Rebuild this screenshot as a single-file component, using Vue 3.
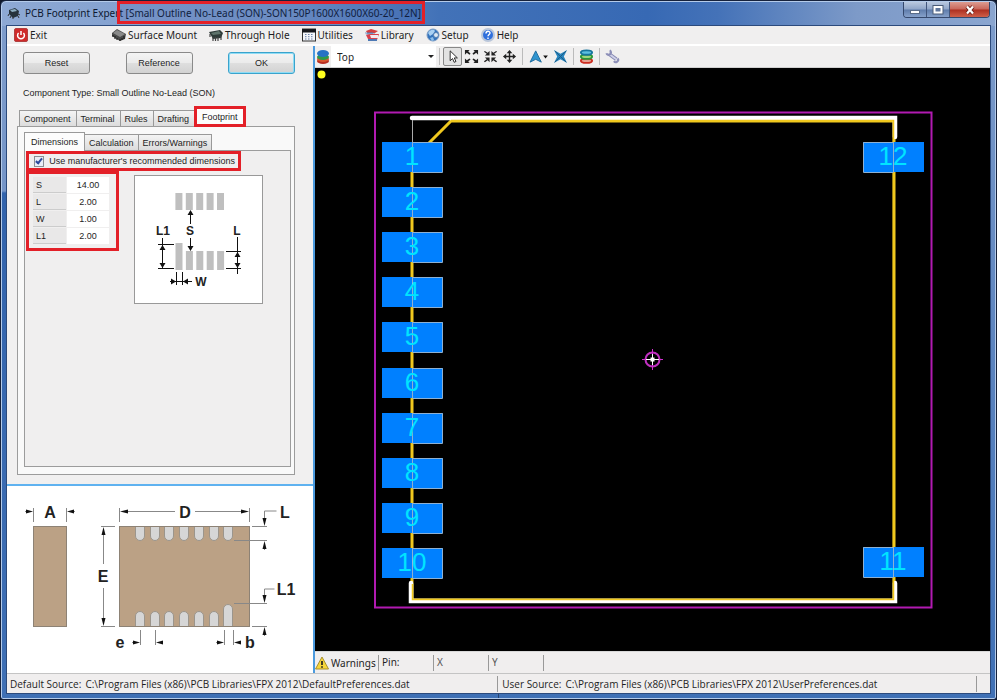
<script setup>
import { ref, computed } from 'vue'

const menu = [
  { label: 'Exit', icon: 'exit' },
  { label: 'Surface Mount', icon: 'chip' },
  { label: 'Through Hole', icon: 'dip' },
  { label: 'Utilities', icon: 'calc' },
  { label: 'Library', icon: 'books' },
  { label: 'Setup', icon: 'gear' },
  { label: 'Help', icon: 'help' }
]
const tabs = ['Component', 'Terminal', 'Rules', 'Drafting', 'Footprint']
const subTabs = ['Dimensions', 'Calculation', 'Errors/Warnings']
const activeTab = ref('Footprint')
const activeSub = ref('Dimensions')
const recommended = ref(true)
const layer = ref('Top')
const dims = ref([
  { name: 'S', value: '14.00' },
  { name: 'L', value: '2.00' },
  { name: 'W', value: '1.00' },
  { name: 'L1', value: '2.00' }
])

const pads = computed(() => {
  const left = Array.from({ length: 10 }, (_, i) => ({ n: i + 1, x: 382, y: 142 + Math.round(i * 45.1) }))
  return [...left, { n: 11, x: 863, y: 547 }, { n: 12, x: 863, y: 142 }]
})
const leads = Array.from({ length: 7 }, (_, i) => 136 + Math.round(i * 14.7))
</script>

<template>
  <div class="window">
    <header class="titlebar">
      <svg class="app-icon" viewBox="0 0 14 14" aria-hidden="true">
        <path d="M2 4 8 2l4 3-1 5-5 2-4-4z" fill="#26333d" />
        <path d="M3 4l5-1 2 2-5 1z" fill="#8fb0c4" />
        <path d="M2 8l-1 2M4 10l-1 2M6 11v2M11 8l2 1M11 10l1 2" stroke="#333" />
      </svg>
      <h1 class="title">PCB Footprint Expert <span class="doc">[Small Outline No-Lead (SON)-SON150P1600X1600X60-20_12N]</span></h1>
      <div class="caption">
        <button type="button" aria-label="Minimize"><svg viewBox="0 0 14 12"><rect x="2.5" y="6.5" width="9" height="3" fill="#fff" stroke="#5a6c88" /></svg></button>
        <button type="button" aria-label="Maximize"><svg viewBox="0 0 14 12"><rect x="3.5" y="3" width="7" height="5.5" fill="none" stroke="#4a5c78" stroke-width="4" /><rect x="3.5" y="3" width="7" height="5.5" fill="#60779c" stroke="#fff" stroke-width="2" /></svg></button>
        <button type="button" class="close" aria-label="Close"><svg viewBox="0 0 14 12"><path d="M4 2.5l6 7M10 2.5l-6 7" stroke="#6d2018" stroke-width="4" /><path d="M4 2.5l6 7M10 2.5l-6 7" stroke="#fff" stroke-width="2.2" /></svg></button>
      </div>
    </header>

    <div class="client">
      <nav class="menubar">
        <button v-for="m in menu" :key="m.label" type="button" :class="['menu-item', m.icon]">
          <svg viewBox="0 0 14 14" aria-hidden="true">
            <template v-if="m.icon === 'exit'">
              <rect x="0.5" y="0.5" width="13" height="13" rx="1.5" fill="#cf2a2a" stroke="#b04040" />
              <path d="M4.600 5a3.400 3.400 0 1 0 4.800 0M7 3v4" fill="none" stroke="#fff" stroke-width="1.5" />
            </template>
            <template v-else-if="m.icon === 'chip'">
              <path d="M0 5 5 1l9 5-1 5-5 2-8-5z" fill="#4a4a4a" />
              <path d="M1 5l4-3 8 4-5 3z" fill="#8a8a8a" />
              <path d="M1 7v2M3 8v3M5 10v2M8 11v2M10 10v2M12 8v3" stroke="#222" stroke-width="1.2" />
            </template>
            <template v-else-if="m.icon === 'dip'">
              <path d="M0 4 11 2l3 3-2 5-8 1z" fill="#2e3b38" />
              <path d="M2 5l8-2 2 3-8 1z" fill="#5f746c" />
              <path d="M1 6v3M4 9v4M6.500 9v4M9 9v4M12 8v4" stroke="#444" stroke-width="1.2" />
            </template>
            <template v-else-if="m.icon === 'calc'">
              <rect x="0.5" y="1" width="13" height="12" fill="#f4f6fa" stroke="#333" />
              <rect x="0" y="1" width="14" height="3.5" fill="#16181c" />
              <path d="M3 6.500h8M3 8.700h8M3 11h8" stroke="#6980a8" stroke-dasharray="1.5 1.5" />
            </template>
            <template v-else-if="m.icon === 'books'">
              <path d="M1 3l5-2 7 2-3 2H2z" fill="#d34040" />
              <path d="M0 4c0 2 1 3 3 3h7V5H3z" fill="#9fb6d4" />
              <path d="M1 7l2 4 9 1 2-6H5z" fill="#d8404c" />
              <path d="M5 7h8v3H6z" fill="#f3e9ee" />
              <path d="M3 12h9" stroke="#4d79b5" stroke-width="2" />
              <path d="M2 5h6" stroke="#4d79b5" />
            </template>
            <template v-else-if="m.icon === 'gear'">
              <circle cx="7" cy="7" r="6" fill="#3474bd" stroke="#7c9cc4" />
              <path d="M2 5c2-4 6-4 7-2L7 6 4 8z" fill="#a9d1f3" />
              <path d="M4 10l3-1 1 3-2 1z" fill="#8fc0ea" />
              <circle cx="10" cy="7" r="2.5" fill="#dce9f5" stroke="#5480b0" />
            </template>
            <template v-else>
              <circle cx="7" cy="7" r="6" fill="#2f6fdc" stroke="#b9c6da" stroke-width="2" />
              <path d="M5 5.500c0-3 4-2.700 4-.5C9 6.500 7 6.500 7 8.300M7 9.500V11" fill="none" stroke="#fff" stroke-width="1.4" />
            </template>
          </svg>
          <span>{{ m.label }}</span>
        </button>
      </nav>

      <div class="workspace">
        <aside class="side">
          <section class="form">
            <div class="actions">
              <button type="button">Reset</button>
              <button type="button">Reference</button>
              <button type="button" class="default">OK</button>
            </div>
            <p class="type">Component Type: Small Outline No-Lead (SON)</p>

            <div class="tabs outer" role="tablist">
              <button v-for="t in tabs" :key="t" type="button" role="tab" :aria-selected="t === activeTab"
                :class="{ active: t === activeTab, marked: t === 'Footprint' }" @click="activeTab = t">{{ t }}</button>
            </div>
            <div class="page outer-page">
              <div class="tabs inner" role="tablist">
                <button v-for="t in subTabs" :key="t" type="button" role="tab" :aria-selected="t === activeSub"
                  :class="{ active: t === activeSub }" @click="activeSub = t">{{ t }}</button>
              </div>
              <div class="page inner-page">
                <label class="check">
                  <input v-model="recommended" type="checkbox" />
                  <span>Use manufacturer's recommended dimensions</span>
                </label>
                <div class="split">
                  <div class="dims">
                    <table>
                      <tbody>
                        <tr v-for="d in dims" :key="d.name">
                          <th scope="row"><label :for="'dim-' + d.name">{{ d.name }}</label></th>
                          <td><input :id="'dim-' + d.name" v-model="d.value" type="text" /></td>
                        </tr>
                      </tbody>
                    </table>
                  </div>
                  <svg class="preview" viewBox="134 175 129 129" role="img" aria-label="Land pattern dimensions">
                    <rect x="134.5" y="175.5" width="128" height="128" fill="#fff" stroke="#999" />
                    <g fill="#bfbfbf">
                      <rect v-for="i in 5" :key="'t' + i" :x="165 + i * 10.4" y="193" width="7" height="17" />
                      <rect v-for="i in 4" :key="'b' + i" :x="175.5 + i * 10.4" y="251" width="7" height="19" />
                      <rect x="175.5" y="243" width="7" height="27" />
                    </g>
                    <path d="M190.500 211v13M190.500 238v12M162.500 238v31M158 244.500h16M158 268.500h16M237.500 237v37M226 251.500h15M226 268.500h15M170 281.500h22M176.500 272v13M182.500 272v13" fill="none" stroke="#111" />
                    <path d="M190.500 210l-3 5h6zM190.500 251l-3-5h6zM162.500 245l-3 5h6zM162.500 268l-3-5h6zM237.500 252l-3 5h6zM237.500 268l-3-5h6zM176 281.500l-5-3v6zM183 281.500l5-3v6z" fill="#111" />
                    <g class="mark small">
                      <text x="163" y="235">L1</text><text x="190" y="235">S</text>
                      <text x="237" y="235">L</text><text x="201" y="286">W</text>
                    </g>
                  </svg>
                </div>
              </div>
            </div>
          </section>

          <svg class="package" viewBox="7 486 306 187" role="img" aria-label="Package outline dimensions">
            <g fill="#bba185" stroke="#8d8275">
              <rect x="33.5" y="526.5" width="33" height="100" />
              <rect x="119.5" y="526.5" width="130" height="100" />
            </g>
            <g fill="#d6d6d6" stroke="#9b958c">
              <path v-for="x in leads" :key="'u' + x" :d="`M${x - 0.5} 527v9a4.5 4.5 0 0 0 9 0v-9`" />
              <path v-for="(x, i) in leads" :key="'d' + x" :d="`M${x - 0.5} 626v${i === 6 ? -17 : -10}a4.5 4.5 0 0 1 9 0v${i === 6 ? 17 : 10}`" />
            </g>
            <path d="M33.500 508v14M66.500 508v14M119.500 508v14M249.500 508v14M126 511.500h49M195 511.500h48M101 526.500h14M101 626.500h14M103.500 533v31M103.500 588v31M252 526.500h15M234 540.500h33M234 603.500h33M252 626.500h15M264.500 518v-7h12M264.500 596v-7h10M140.500 630v15M155.500 630v15M224.500 630v15M233.500 630v15M25 511.500h4M70 511.500h5M132 642.500h4M159 642.500h4M216 642.500h4M237 642.500h4M264.500 545v5M264.500 630v6" fill="none" stroke="#888" />
            <path d="M33 511.500l-7-2v4zM67 511.500l7-2v4zM120 511.500l8-2v4zM249 511.500l-8-2v4zM103.500 527l-2 8h4zM103.500 626l-2-8h4zM264.500 526l-2-8h4zM264.500 541l-2 8h4zM264.500 603l-2-8h4zM264.500 627l-2 8h4zM140 642.500l-7-2v4zM156 642.500l7-2v4zM224 642.500l-7-2v4zM234 642.500l7-2v4z" fill="#111" />
            <g class="mark">
              <text x="50" y="518">A</text><text x="185" y="518">D</text><text x="285" y="518">L</text>
              <text x="103" y="582">E</text><text x="286" y="595">L1</text>
              <text x="120" y="648">e</text><text x="250" y="648">b</text>
            </g>
          </svg>
        </aside>

        <main class="view">
          <div class="toolbar">
            <svg class="layers" viewBox="0 0 16 16" aria-hidden="true">
              <ellipse cx="8" cy="12" rx="6" ry="3" fill="#b82e22" /><ellipse cx="8" cy="10" rx="6" ry="3" fill="#d8552e" />
              <ellipse cx="8" cy="8" rx="6" ry="3" fill="#2f9a48" /><ellipse cx="8" cy="4.5" rx="6" ry="3.5" fill="#2672c4" />
            </svg>
            <div class="layer-pick">
              <select v-model="layer" aria-label="Layer"><option>Top</option><option>Bottom</option></select>
            </div>
            <i class="sep"></i>
            <button type="button" class="pressed" aria-label="Select">
              <svg viewBox="0 0 16 16"><path d="M5.500 2v10.500l2.500-2.300 1.800 4 1.900-.9-1.800-3.800h3.300z" fill="#fff" stroke="#222" /></svg>
            </button>
            <button type="button" aria-label="Zoom to fit">
              <svg viewBox="0 0 16 16"><path d="M1 1h5L4.500 2.500 7 5 5.800 6 3 4 1 6zM15 1v5l-2-2-2.800 2L9 5l2.500-2.500L10 1zM1 15v-5l2 2 2.800-2L7 11l-2.500 2.500L6 15zM15 15h-5l1.500-1.500L9 11l1.200-1 2.800 2 2-2z" fill="#222" /></svg>
            </button>
            <button type="button" aria-label="Shrink view">
              <svg viewBox="0 0 16 16"><path d="M7 7H2l2-2-3-2 1-1 3 2 2-2zM9 7V2l2 2 3-2 1 1-3 2 2 2zM7 9v5l-2-2-3 2-1-1 3-2-2-2zM9 9h5l-2 2 3 2-1 1-3-2-2 2z" fill="#222" /></svg>
            </button>
            <button type="button" aria-label="Pan">
              <svg viewBox="0 0 16 16"><path d="M8 3v10M3 8h10" stroke="#222" stroke-width="1.5" /><path d="M8 1l3 3.500H5zM8 15l3-3.500H5zM1 8l3.500-3v6zM15 8l-3.500-3v6z" fill="#222" /></svg>
            </button>
            <i class="sep"></i>
            <button type="button" class="wide" aria-label="Measure">
              <svg viewBox="0 0 22 16"><path d="M8 2l6 12-6-3-6 3z" fill="#2f94cf" stroke="#1b6a9c" /><path d="M16 7h5l-2.500 3z" fill="#111" /></svg>
            </button>
            <button type="button" aria-label="Clear measurements">
              <svg viewBox="0 0 16 16"><path d="M1 1l7 4 7-4-3.500 7L15 15l-7-4-7 4 3.500-7z" fill="#2784bd" /><path d="M2 2l12 12M14 2 2 14" stroke="#1b5b85" /></svg>
            </button>
            <i class="sep"></i>
            <button type="button" aria-label="Layers">
              <svg viewBox="0 0 16 16"><g stroke-width="2"><ellipse cx="8" cy="12.5" rx="6" ry="2.3" fill="#e4a090" stroke="#cc2c20" /><ellipse cx="8" cy="8.2" rx="6" ry="2.3" fill="#9ed67b" stroke="#2c9738" /><ellipse cx="8" cy="3.8" rx="6" ry="2.3" fill="#5cc0df" stroke="#17759c" /></g></svg>
            </button>
            <i class="sep"></i>
            <button type="button" aria-label="Options">
              <svg viewBox="0 0 16 16"><path d="M4 5l8 6" stroke="#8588b2" stroke-width="4" /><path d="M4 5l8 6" stroke="#cfd0e8" stroke-width="2" /><path d="M5 1.500a2.500 2.500 0 1 1-3.500 3M9.500 13a2.500 2.500 0 1 0 4-3" fill="none" stroke="#8d8fb8" stroke-width="2.2" /></svg>
            </button>
          </div>

          <svg class="board" viewBox="315 68 675 583" role="img" aria-label="Footprint">
            <circle cx="321.5" cy="74.5" r="4" fill="#ffff1e" />
            <rect x="375" y="112.5" width="556.5" height="495" fill="none" stroke="#b21ab2" stroke-width="2" />
            <path d="M412 158v442h482V121H451l-39 39" fill="none" stroke="#f0c81e" stroke-width="3" />
            <path d="M412 118h483v19M411 583v18h484v-18" fill="none" stroke="#fff" stroke-width="4.5" stroke-linecap="round" />
            <path d="M412.500 584v15.500H893.500V120.500H451" fill="none" stroke="#f0c81e" stroke-width="1.5" />
            <path d="M412.500 120v30" stroke="#aaa" />
            <rect v-for="p in pads" :key="p.n" :x="p.x" :y="p.y" width="61" height="30" fill="#0080ff" />
            <g fill="none" stroke="#8db0d2">
              <path v-for="p in pads" :key="p.n" :d="p.x < 600 ? `M412.5 ${p.y}v30M412.5 ${p.y + .5}h30v30h-30` : `M893.5 ${p.y}v30M893.5 ${p.y + .5}h-30v30h30`" />
            </g>
            <g class="pin">
              <text v-for="p in pads" :key="p.n" :x="p.x + 30" :y="p.y + 23">{{ p.n }}</text>
            </g>
            <circle cx="652.5" cy="359.5" r="7" fill="none" stroke="#c030c0" stroke-width="2" />
            <path d="M652.500 349v21M642 359.500h21" stroke="#d030d0" />
            <path d="M652.500 354v11M646 359.500h13" stroke="#fff" />
            <rect x="650.5" y="357.5" width="4" height="4" fill="#fff" />
          </svg>

          <div class="readout">
            <button type="button" class="warn">
              <svg viewBox="0 0 14 14" aria-hidden="true"><path d="M7 1l6.500 12H.5z" fill="#f7d63a" stroke="#a8902c" /><path d="M7 5v4M7 10.200v1.500" stroke="#222" stroke-width="1.7" /></svg>
              <span>Warnings</span>
            </button>
            <span class="cell">Pin:</span>
            <span class="cell dim">X</span>
            <span class="cell dim">Y</span>
            <span class="cell"></span>
          </div>
        </main>
      </div>

      <footer class="status">
        <div class="source"><span>Default Source:</span><span>C:\Program Files (x86)\PCB Libraries\FPX 2012\DefaultPreferences.dat</span></div>
        <div class="source"><span>User Source:</span><span>C:\Program Files (x86)\PCB Libraries\FPX 2012\UserPreferences.dat</span></div>
      </footer>
    </div>
  </div>
</template>

<style>
body { background: #10182a; }
</style>

<style scoped>
.window {
  box-sizing: border-box;
  height: 100vh;
  min-height: 600px;
  display: flex;
  flex-direction: column;
  padding: 1px 6px 6px;
  border: 1px solid #16223c;
  border-radius: 6px 6px 3px 3px;
  background:
    linear-gradient(90deg, #8ea9d4, #7899cb 28%, #4272b8 44%, #3769b4 65%, #4472b8 72%, #7d9ac8 86%, #8aa5cf) top / 100% 25px no-repeat,
    linear-gradient(#7f9dcb, #7595c8 190px, #3263ac 192px, #3f70b5) left / 50% 100% no-repeat,
    linear-gradient(#7f9dcb, #5c84bf 50%, #3f70b5) right / 50% 100% no-repeat;
  box-shadow: inset 0 0 0 1px #b4cbea;
  font: 10px/14px "Noto Sans", sans-serif;
  color: #1e1e1e;
}
button, input, select { font: inherit; color: inherit; margin: 0; }
button { padding: 0; border: 0; background: none; }
svg { display: block; }

.titlebar { display: flex; align-items: flex-start; height: 24px; }
.app-icon { width: 14px; height: 14px; margin: 4px 4px 0 0; }
.title { flex: 1; margin: 4px 0 0; font-size: 10px; line-height: 14px; font-weight: 400; color: #0d1830; white-space: nowrap; }
.doc { position: relative; }
.doc::after { content: ""; position: absolute; inset: -5px -4px -4px -9px; border: 3px solid #e32028; background: rgba(40, 70, 150, .15); }
.caption { display: flex; height: 15px; border: 1px solid #35486c; border-top: 0; border-radius: 0 0 4px 4px; overflow: hidden; }
.caption button { display: grid; place-items: center; width: 23px; border-right: 1px solid #41557c; background: linear-gradient(#b9c8df, #8fa5c8 48%, #5f7cab 52%, #86a1ca); }
.caption .close { width: 39px; border-right: 0; background: linear-gradient(#dd9c91, #c9665a 48%, #ad2f20 52%, #cf5f48); }
.caption svg { width: 14px; height: 12px; }

.client { flex: 1; display: flex; flex-direction: column; background: #f0f0f0; outline: 1px solid #2c4a7c; min-height: 0; }
.menubar { display: flex; align-items: center; height: 18px; padding-left: 7px; border-bottom: 2px solid #fff; background: #f0efef; }
.menu-item { display: flex; align-items: center; gap: 2px; margin-right: 12px; white-space: nowrap; }
.menu-item.exit { margin-right: 65px; }
.menu-item svg { width: 14px; height: 14px; }

.workspace { flex: 1; display: grid; grid-template: minmax(0, 1fr) / 308px minmax(0, 1fr); min-height: 0; }
.side { display: flex; flex-direction: column; border-right: 2px solid #4b9ade; background: #fff; }
.form { flex: 1; display: flex; flex-direction: column; padding: 6px 18px 9px 10px; border-bottom: 2px solid #5fb2f0; background: #f1f0f0; font: 9px/12px "Liberation Sans", Arial, sans-serif; }
.actions { display: flex; justify-content: space-between; padding-left: 6px; }
.actions button { width: 67px; height: 22px; border: 1px solid #8a8a8a; border-radius: 3px; background: linear-gradient(#f4f4f4, #ebebeb 48%, #dedede 52%, #d2d2d2); }
.actions .default { border-color: #3aa3cc; box-shadow: inset 0 0 0 1px #8fdcf5; }
.type { margin: 13px 0 7px 6px; }
.tabs { display: flex; align-items: flex-end; position: relative; z-index: 1; }
.tabs button { box-sizing: border-box; height: 16px; padding: 0 4px; border: 1px solid #999; border-bottom: 0; margin-right: -1px; background: linear-gradient(#f4f4f4, #dcdcdc); white-space: nowrap; }
.tabs.outer button { padding-right: 5px; }
.tabs .active { height: 19px; margin-bottom: -1px; padding: 0 6px; background: #fcfcfc; }
.tabs .marked { border: 3px solid #e32028; padding: 0 5px; height: 21px; margin-bottom: -1px; }
.outer { padding-left: 2px; }
.page { flex: 1; border: 1px solid #9c9c9c; }
.outer-page { display: flex; flex-direction: column; padding: 5px 3px 7px 6px; background: #f9f9f9; }
.inner-page { padding: 0 1px; background: #f0efef; }
.check { display: flex; align-items: center; gap: 5px; width: 201px; height: 14px; padding: 0 3px 0 5px; border: 3px solid #e32028; white-space: nowrap; }
.check input { appearance: none; box-sizing: border-box; width: 11px; height: 11px; border: 1px solid #8a8f94; background: #e9eef7; }
.check input:checked::after { content: ""; display: block; width: 2px; height: 5px; margin-left: 2px; border: solid #2c4a9c; border-width: 0 2px 2px 0; transform: rotate(40deg); }
.split { display: flex; align-items: flex-start; gap: 15px; }
.dims { box-sizing: border-box; width: 93px; height: 80px; padding: 2px 3px; border: 3px solid #e32028; }
.dims table { border-collapse: separate; border-spacing: 1px; width: 78px; }
.dims th, .dims td { padding: 0; height: 16px; }
.dims th { width: 33px; text-align: left; font-weight: 400; background: #e9e8e8; border-bottom: 1px solid #ccc; box-sizing: border-box; }
.dims label { padding-left: 3px; }
.dims input { display: block; box-sizing: border-box; width: 42px; height: 16px; padding: 0; border: 0; background: #fff; text-align: center; }
.preview { width: 129px; height: 129px; margin-top: 4px; }
.package { width: 306px; height: 187px; max-width: 100%; }
.mark { font: 700 16px "Liberation Sans", Arial, sans-serif; text-anchor: middle; fill: #222; }
.small { font-size: 12px; }

.view { display: flex; flex-direction: column; min-width: 0; min-height: 0; }
.toolbar { display: flex; align-items: center; height: 21px; background: #f0efef; border-bottom: 1px solid #d0d0d0; }
.layers { width: 16px; height: 16px; }
.layer-pick { position: relative; width: 105px; height: 21px; }
.layer-pick::after { content: ""; position: absolute; right: 2px; top: 9px; border: 3px solid transparent; border-top-color: #222; pointer-events: none; }
.layer-pick select { appearance: none; width: 100%; height: 21px; padding: 0 6px; border: 0; border-radius: 0; background: #fff; }
.toolbar button { display: grid; place-items: center; box-sizing: border-box; width: 19px; height: 19px; }
.toolbar button svg { width: 15px; height: 15px; }
.toolbar .wide { width: 25px; }
.toolbar .wide svg { width: 21px; }
.toolbar .pressed { border: 1px solid #888; border-radius: 2px; background: #e2e2e2; }
.sep { width: 1px; height: 17px; margin: 0 3px; background: #bbb; }
.board { flex: 1; width: 100%; min-height: 0; background: #000; }
.pin { font: 26px "Liberation Sans", Arial, sans-serif; text-anchor: middle; fill: #00e4ff; }
.readout { display: flex; align-items: center; height: 21px; background: #f0eeee; border-top: 1px solid #d8d8d8; }
.warn { display: flex; align-items: center; gap: 2px; width: 63px; }
.warn svg { width: 14px; height: 14px; }
.cell { box-sizing: border-box; width: 55px; height: 16px; padding-left: 3px; border-left: 1px solid #999; }
.dim { color: #555; }
.status { display: grid; grid-template-columns: 51fr 50fr; align-items: center; height: 19px; border-top: 1px solid #c4c4c4; background: #f0eeee; padding: 0 13px 0 3px; font-family: "Open Sans", sans-serif; }
.source { display: flex; gap: 4px; height: 16px; line-height: 16px; white-space: nowrap; border-right: 1px solid #999; }
.source + .source { padding-left: 4px; }
</style>
